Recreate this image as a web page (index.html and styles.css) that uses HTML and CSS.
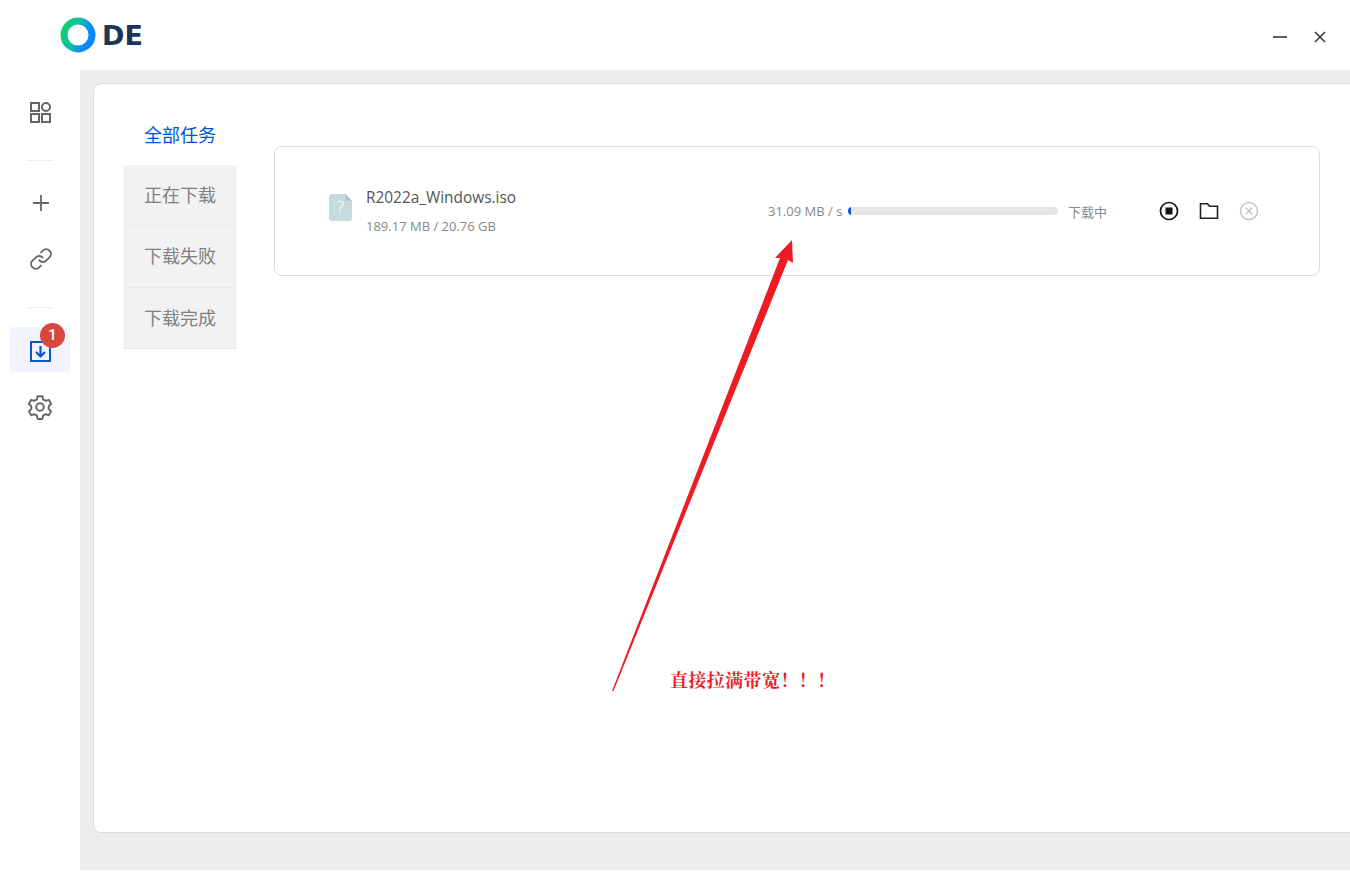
FILE: index.html
```html
<!DOCTYPE html>
<html lang="zh-CN">
<head>
<meta charset="utf-8">
<title>ODE</title>
<link rel="stylesheet" href="styles.css">
</head>
<body>
<div class="app">
  <header class="topbar">
    <div class="logo">
      <svg class="logo-ring" width="36" height="36" viewBox="0 0 36 36">
        <defs>
          <linearGradient id="ring" x1="0" y1="0.2" x2="1" y2="0.6">
            <stop offset="0" stop-color="#10cf6f"/>
            <stop offset="0.45" stop-color="#10bfa8"/>
            <stop offset="0.8" stop-color="#0a8cf5"/>
            <stop offset="1" stop-color="#0a86fa"/>
          </linearGradient>
        </defs>
        <circle cx="18" cy="18" r="14" fill="none" stroke="url(#ring)" stroke-width="7"/>
      </svg>
      <span class="logo-text">DE</span>
    </div>
    <div class="window-btns">
      <svg width="16" height="16" viewBox="0 0 16 16"><path d="M1 8h14" stroke="#333" stroke-width="1.6" fill="none"/></svg>
      <svg width="16" height="16" viewBox="0 0 16 16"><path d="M3 3l10 10M13 3L3 13" stroke="#333" stroke-width="1.5" fill="none"/></svg>
    </div>
  </header>
  <div class="body">
    <nav class="sidebar">
      <div class="nav-item">
        <svg class="icon-shift" width="21" height="21" viewBox="0 0 21 21" fill="none" stroke="#666" stroke-width="2"><rect x="1" y="1" width="8" height="8"/><circle cx="16" cy="5" r="4"/><rect x="1" y="12" width="8" height="8"/><rect x="12" y="12" width="8" height="8"/></svg>
      </div>
      <div class="divider"></div>
      <div class="nav-item">
        <svg class="plus" width="20" height="20" viewBox="0 0 20 20" fill="none" stroke="#666" stroke-width="1.800"><path d="M10 2v16M2 10h16"/></svg>
      </div>
      <div class="nav-item">
        <svg class="icon-shift" width="24" height="24" viewBox="0 0 24 24" fill="none" stroke="#666" stroke-width="1.900" stroke-linecap="round"><path d="M10.500 13.500a4.600 4.600 0 0 0 6.700.2l3.300-3.300a4.700 4.700 0 0 0-6.700-6.700l-1.700 1.700"/><path d="M13.500 10.500a4.600 4.600 0 0 0-6.700-.2l-3.300 3.300a4.700 4.700 0 0 0 6.700 6.700l1.700-1.700"/></svg>
      </div>
      <div class="divider"></div>
      <div class="nav-item active">
        <svg class="download" width="21" height="21" viewBox="0 0 21 21" fill="none" stroke="#0b57d0" stroke-width="2"><rect x="1" y="1" width="19" height="19"/><path d="M10.500 5v10.500M6 11l4.500 4.500L15 11" stroke-width="2.200"/></svg>
        <span class="badge">1</span>
      </div>
      <div class="nav-item">
        <svg width="26" height="26" viewBox="0 0 24 24" fill="none" stroke="#666" stroke-width="1.800" stroke-linejoin="round"><circle cx="12" cy="12" r="3.500"/><path d="M9.800 2h4.400l.6 3 2.400 1.400 2.900-1 2.200 3.800-2.300 2v2.600l2.300 2-2.200 3.800-2.900-1-2.400 1.400-.6 3H9.800l-.6-3-2.400-1.400-2.900 1-2.200-3.800 2.300-2v-2.600l-2.300-2 2.200-3.800 2.900 1L9.200 5z"/></svg>
      </div>
    </nav>
    <main class="main">
      <section class="panel">
        <div class="tabs">
          <div class="tab current">全部任务</div>
          <div class="tab">正在下载</div>
          <div class="tab">下载失败</div>
          <div class="tab">下载完成</div>
        </div>
        <div class="task">
          <svg class="file-icon" width="23" height="27" viewBox="0 0 24 28"><path d="M3 0h14l7 7v18a3 3 0 0 1-3 3H3a3 3 0 0 1-3-3V3a3 3 0 0 1 3-3z" fill="#c5dbe0"/><path d="M17 0l7 7h-5a2 2 0 0 1-2-2z" fill="#a9c6cd"/><text x="12" y="20" class="file-q">?</text></svg>
          <div class="file-info">
            <div class="file-name">R2022a_Windows.iso</div>
            <div class="file-size">189.17 MB / 20.76 GB</div>
          </div>
          <div class="speed">31.09 MB / s</div>
          <div class="bar"><div class="bar-fill"></div></div>
          <div class="status">下载中</div>
          <div class="actions">
            <svg width="20" height="20" viewBox="0 0 20 20"><circle cx="10" cy="10" r="8.500" fill="none" stroke="#111" stroke-width="1.700"/><rect x="6.500" y="6.500" width="7" height="7" fill="#111"/></svg>
            <svg width="20" height="20" viewBox="0 0 20 20"><path d="M1.500 2.800h7l2 2.500h8v11.900h-17z" fill="none" stroke="#222" stroke-width="1.600"/></svg>
            <svg width="20" height="20" viewBox="0 0 20 20" fill="none" stroke="#c4c4c4"><circle cx="10" cy="10" r="8.500" stroke-width="1.500"/><path d="M6.800 6.800l6.400 6.400M13.200 6.800l-6.400 6.400" stroke-width="1.500"/></svg>
          </div>
        </div>
      </section>
    </main>
  </div>
</div>
<svg class="arrow" width="200" height="460" viewBox="600 235 200 460"><polygon points="612,691 780,258 775,258 792,240 793,263 788,260 613.500,691" fill="#ed1c24"/></svg>
<div class="note">直接拉满带宽！！！</div>
</body>
</html>
```
FILE: styles.css
```css
* { box-sizing: border-box; }
html, body { margin: 0; padding: 0; background: #fff; }
body { width: 1350px; height: 875px; overflow: hidden; position: relative; font-family: "Open Sans", "Noto Sans CJK SC", sans-serif; }
.app { height: 870px; display: flex; flex-direction: column; overflow: hidden; }
.topbar { height: 70px; flex: none; display: flex; align-items: center; justify-content: space-between; padding: 0 22px 0 60px; }
.logo { display: flex; align-items: center; gap: 6px; }
.logo-ring { display: block; }
.logo-text { font-family: "DejaVu Sans", sans-serif; font-weight: 700; font-size: 27px; color: #1b3558; line-height: 36px; padding-top: 2px; }
.window-btns { display: flex; gap: 24px; margin-top: 4px; }
.body { flex: 1; display: flex; min-height: 0; }
.sidebar { width: 80px; flex: none; padding-top: 20px; display: flex; flex-direction: column; align-items: center; gap: 12px; }
.nav-item { width: 60px; height: 45px; display: flex; align-items: center; justify-content: center; position: relative; border-radius: 4px; }
.nav-item.active { background: #f1f3fe; }
.icon-shift { margin-left: 1px; margin-bottom: 1px; }
.plus { margin-left: 1px; }
.download { margin-left: 1px; margin-top: 3px; }
.divider { width: 26px; height: 1px; background: #eeeeee; margin: 13px 0 7px; }
.badge { position: absolute; left: 30px; top: -4px; width: 25px; height: 25px; border-radius: 50%; background: #d9483f; color: #fff; font-family: Roboto, sans-serif; font-size: 15px; font-weight: 500; line-height: 25px; text-align: center; }
.main { flex: 1; background: #ededed; padding: 13px 0 37px 13px; min-width: 0; }
.panel { height: 100%; margin-right: -10px; background: #fff; border: 1px solid #dcdcdc; border-radius: 8px; padding: 20px 39px 0 30px; display: flex; align-items: flex-start; gap: 38px; }
.tabs { width: 112px; flex: none; }
.tab { height: 61px; padding-bottom: 3px; background: #f2f2f2; border: 1px solid #e8e8e8; border-top: 0; font-size: 18px; color: #808080; display: flex; align-items: center; justify-content: center; font-family: "Noto Sans CJK SC", sans-serif; font-weight: 400; }
.tab:nth-child(3) { height: 62px; }
.tab.current { background: #fff; border: 0; color: #0052d9; padding-bottom: 2px; }
.task { flex: 1; margin-top: 42px; height: 130px; border: 1px solid #dcdcdc; border-radius: 8px; display: flex; align-items: center; padding: 0 60px 0 54px; }
.file-icon { flex: none; margin-right: 14px; margin-bottom: 8px; }
.file-q { font-family: "Open Sans", sans-serif; font-size: 18px; font-weight: 300; fill: #fff; text-anchor: middle; }
.file-info { width: 402px; flex: none; margin-top: 1px; }
.file-name { font-size: 15.4px; color: #555; line-height: 22px; }
.file-size { font-size: 13px; color: #888; line-height: 20px; margin-top: 7px; }
.speed { width: 80px; flex: none; font-size: 13px; color: #888; white-space: nowrap; }
.bar { width: 210px; height: 8px; flex: none; background: #e6e6e6; border-radius: 4px; overflow: hidden; }
.bar-fill { width: 3px; height: 100%; background: #0b57d0; }
.status { margin-left: 10px; width: 60px; flex: none; font-size: 13px; color: #888; font-family: "Noto Sans CJK SC", sans-serif; font-weight: 400; }
.actions { display: flex; gap: 20px; flex: none; margin-left: 31px; }
.arrow { position: absolute; left: 600px; top: 235px; }
.note { position: absolute; left: 670px; top: 668px; font-family: "Noto Serif CJK SC", "Liberation Serif", "Noto Sans CJK SC", serif; font-weight: 700; font-size: 18px; letter-spacing: 0.4px; line-height: 22px; color: #ed1c24; }
```
